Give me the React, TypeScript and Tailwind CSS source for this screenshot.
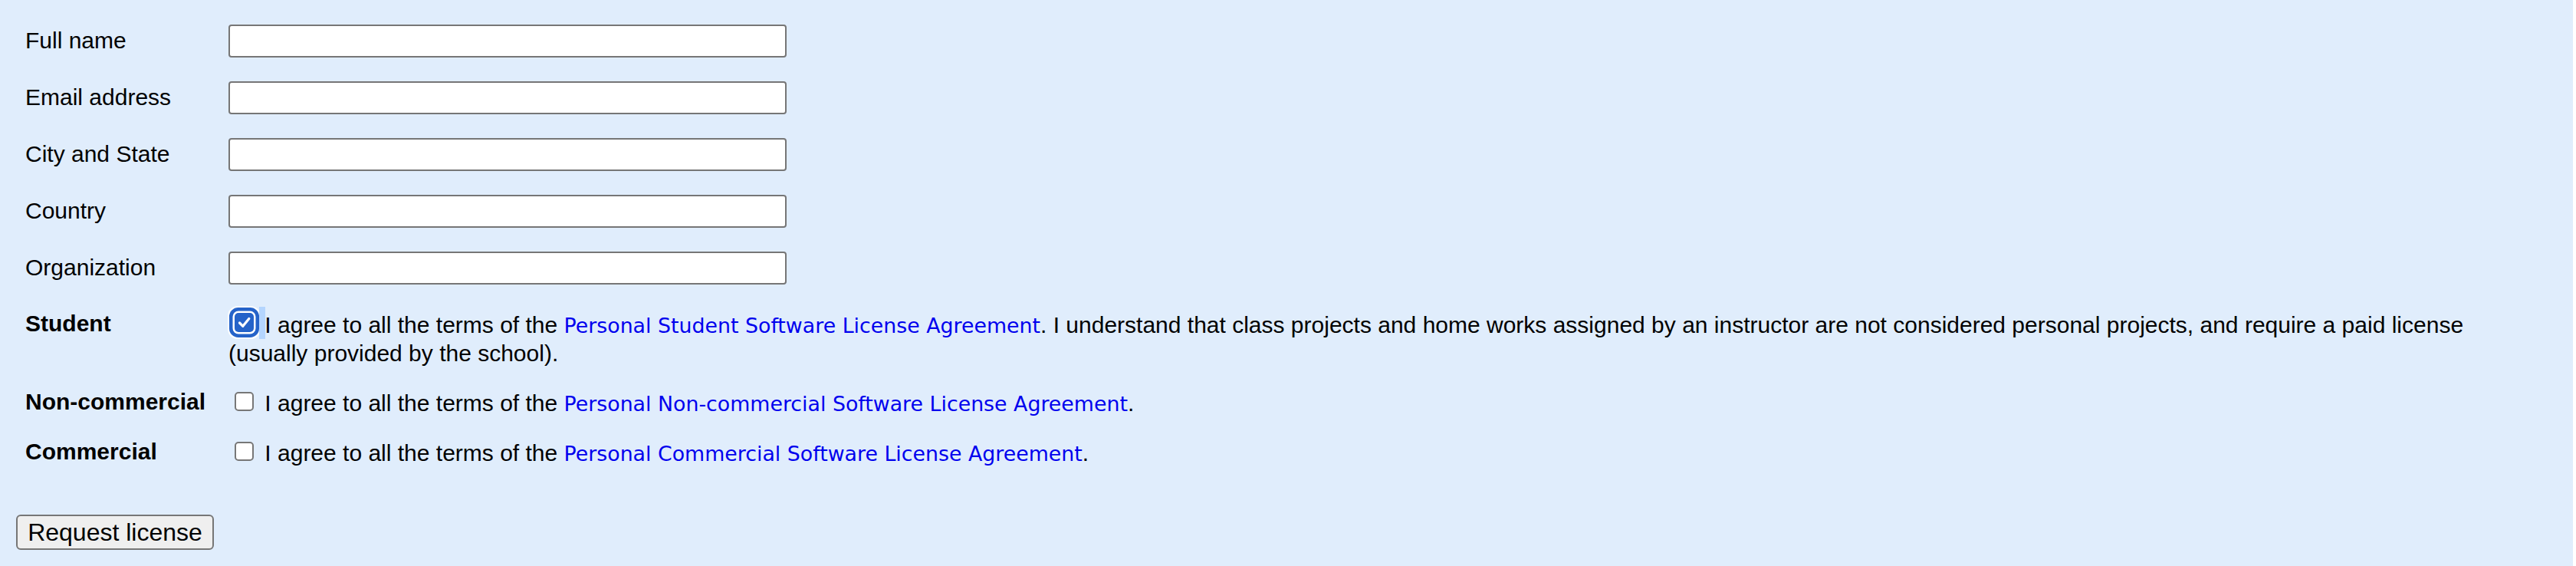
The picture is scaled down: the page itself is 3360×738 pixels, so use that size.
const fields = ["Full name", "Email address", "City and State", "Country", "Organization"];

function CheckBox({ checked }: { checked?: boolean }) {
  if (checked) {
    return (
      <span className="relative ml-[8px] mr-[6px] inline-block h-[25px] w-[25px] rounded-[5px] bg-[#2563c9] align-[1px] shadow-[0_0_0_2.5px_#ffffff,0_0_0_7px_#2563c9,0_0_0_9px_rgba(255,255,255,0.85)]">
        <svg viewBox="0 0 25 25" className="absolute inset-0 h-[25px] w-[25px]">
          <path
            d="M6.5 13 L10.8 17.3 L18.8 7.5"
            fill="none"
            stroke="#ffffff"
            strokeWidth="3.2"
            strokeLinecap="round"
            strokeLinejoin="round"
          />
        </svg>
        {/* selected space after the box */}
        <span className="absolute left-[31.5px] top-[-8px] h-[42px] w-[8px] bg-[#b4d5fe]" />
      </span>
    );
  }
  return (
    <span className="ml-[8px] mr-[6px] inline-block h-[25px] w-[25px] rounded-[5px] border-2 border-[#777777] bg-white align-baseline" />
  );
}

function LicenseLink({ children }: { children: React.ReactNode }) {
  return (
    <a
      href="#"
      className="font-['DejaVu_Sans',Verdana,sans-serif] text-[26.8px] leading-none text-[#0000ee]"
    >
      {children}
    </a>
  );
}

export default function App() {
  return (
    <div className="flex h-[738px] w-full bg-white font-['Liberation_Sans',Arial,Helvetica,sans-serif] text-[30px] leading-[37px] text-black">
      <div className="mr-[4px] flex-1 bg-[#e0edfc] pl-[21px] pt-[32px]">
        <div className="flex flex-col gap-[31px] pl-[12px]">
          {fields.map((f) => (
            <div key={f} className="flex h-[43px] items-start">
              <div className="w-[265px] pt-[2px]">{f}</div>
              <input
                type="text"
                className="h-[43px] w-[728px] rounded-[4px] border-2 border-[#767676] bg-white"
              />
            </div>
          ))}
        </div>

        <div className="mt-[32px] flex flex-col gap-[26px] pl-[12px]">
          {/* Student */}
          <div className="flex items-start">
            <div className="w-[265px] shrink-0 font-bold">Student</div>
            <div className="flex-1 pt-[2px] whitespace-nowrap">
              <CheckBox checked />
              {" "}I agree to all the terms of the{" "}
              <LicenseLink>Personal Student Software License Agreement</LicenseLink>. I understand that class projects and home works assigned by an instructor are not considered personal projects, and require a paid license
              <br />
              (usually provided by the school).
            </div>
          </div>

          {/* Non-commercial */}
          <div className="flex items-start">
            <div className="w-[265px] shrink-0 font-bold">Non-commercial</div>
            <div className="flex-1 pt-[2px]">
              <CheckBox />
              {" "}I agree to all the terms of the{" "}
              <LicenseLink>Personal Non-commercial Software License Agreement</LicenseLink>.
            </div>
          </div>

          {/* Commercial */}
          <div className="flex items-start">
            <div className="w-[265px] shrink-0 font-bold">Commercial</div>
            <div className="flex-1 pt-[2px]">
              <CheckBox />
              {" "}I agree to all the terms of the{" "}
              <LicenseLink>Personal Commercial Software License Agreement</LicenseLink>.
            </div>
          </div>
        </div>

        <button
          type="button"
          className="mt-[62px] flex h-[46px] w-[258px] items-center justify-center rounded-[6px] border-2 border-[#767676] bg-[#efefef] text-[32px] leading-none text-black"
        >
          Request license
        </button>
      </div>
    </div>
  );
}
